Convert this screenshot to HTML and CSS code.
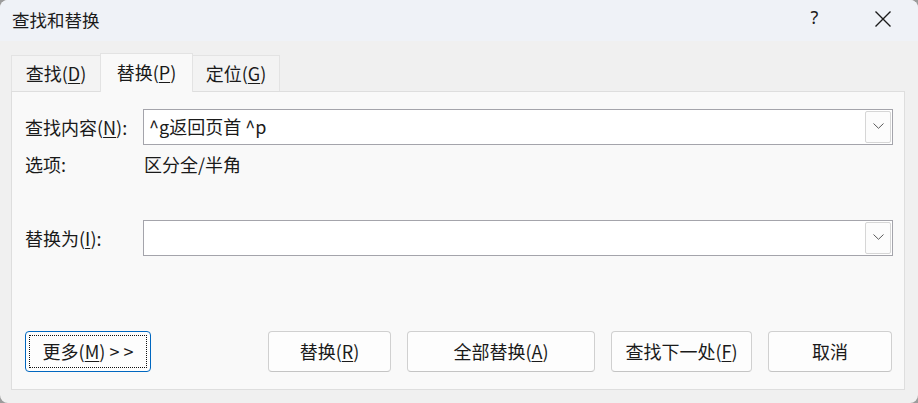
FILE: index.html
```html
<!DOCTYPE html>
<html lang="zh-CN">
<head>
<meta charset="utf-8">
<title>查找和替换</title>
<link rel="stylesheet" href="styles.css">
</head>
<body>
<div class="window">
  <div class="titlebar">
    <span class="title">查找和替换</span>
    <div class="caption">
      <span class="cap-btn help">?</span>
      <span class="cap-btn close">
        <svg width="16" height="16" viewBox="0 0 16 16"><path d="M0.5 0.5 L15.5 15.5 M15.5 0.5 L0.5 15.5" stroke="#1b1b1b" stroke-width="1.4" fill="none"/></svg>
      </span>
    </div>
  </div>
  <div class="body">
    <div class="tabs">
      <div class="tab t1">查找(<u>D</u>)</div>
      <div class="tab t2 active">替换(<u>P</u>)</div>
      <div class="tab t3">定位(<u>G</u>)</div>
    </div>
    <div class="panel">
      <div class="field-row">
        <span class="label">查找内容(<u>N</u>):</span>
        <div class="combo">
          <span class="combo-text">^g返回页首 ^p</span>
          <span class="combo-btn"><svg width="11" height="6" viewBox="0 0 11 6"><path d="M0.5 0.5 L5.5 5.3 L10.5 0.5" stroke="#5a5a5a" stroke-width="1" fill="none"/></svg></span>
        </div>
      </div>
      <div class="options-row">
        <span class="label">选项:</span>
        <span class="opt-value">区分全/半角</span>
      </div>
      <div class="field-row replace-row">
        <span class="label">替换为(<u>I</u>):</span>
        <div class="combo">
          <span class="combo-text"></span>
          <span class="combo-btn"><svg width="11" height="6" viewBox="0 0 11 6"><path d="M0.5 0.5 L5.5 5.3 L10.5 0.5" stroke="#5a5a5a" stroke-width="1" fill="none"/></svg></span>
        </div>
      </div>
      <div class="buttons">
        <button class="btn more">更多(<u>M</u>) &gt; &gt;</button>
        <div class="btn-group">
          <button class="btn b-replace">替换(<u>R</u>)</button>
          <button class="btn b-all">全部替换(<u>A</u>)</button>
          <button class="btn b-next">查找下一处(<u>F</u>)</button>
          <button class="btn b-cancel">取消</button>
        </div>
      </div>
    </div>
  </div>
</div>
</body>
</html>
```

FILE: styles.css
```css
* { box-sizing: border-box; }
html, body { margin: 0; padding: 0; }
body {
  width: 918px;
  height: 403px;
  background: #9c9c9c;
  font-family: "Noto Sans CJK SC", "Noto Sans", sans-serif;
  font-size: 18px;
  color: #1a1a1a;
  overflow: hidden;
}
u { text-decoration: underline; text-underline-offset: 2px; text-decoration-thickness: 1px; }

.window {
  width: 918px;
  height: 403px;
  background: #f0f0f0;
  border-radius: 8px;
  overflow: hidden;
  display: flex;
  flex-direction: column;
}

.titlebar {
  height: 41px;
  background: #eff2f7;
  display: flex;
  align-items: center;
  justify-content: space-between;
  padding-left: 12px;
}
.title { font-size: 17.5px; line-height: 24px; margin-top: -2px; }
.caption { display: flex; height: 41px; }
.cap-btn {
  width: 69px;
  height: 41px;
  display: flex;
  align-items: center;
  justify-content: center;
}
.help { font-size: 18px; font-family: "Noto Sans", sans-serif; color: #1b1b1b; margin-top: -4px; }
.close svg { margin-top: -4px; margin-left: -1px; }

.body {
  flex: 1;
  display: flex;
  flex-direction: column;
  padding: 12px 13px 13px 11px;
}

.tabs {
  display: flex;
  align-items: flex-end;
  height: 38px;
  position: relative;
  z-index: 1;
}
.tab {
  height: 36px;
  display: flex;
  align-items: center;
  justify-content: center;
  background: #f3f3f3;
  border: 1px solid #e3e3e3;
  border-bottom: none;
  line-height: 1;
  padding-bottom: 1px;
}
.t1 { width: 89px; border-right: none; }
.t2 { width: 93px; }
.t3 { width: 87px; border-left: none; }
.tab.active {
  height: 39px;
  margin-bottom: -1px;
  background: #f9f9f9;
  border-color: #e3e3e3;
  padding-bottom: 3px;
}

.panel {
  flex: 1;
  background: #f9f9f9;
  border: 1px solid #dedede;
  padding: 17px 11px 17px 13px;
  display: flex;
  flex-direction: column;
}

.field-row {
  display: flex;
  align-items: center;
  height: 36px;
}
.label { width: 118px; flex: none; line-height: 24px; }
.combo {
  flex: 1;
  height: 36px;
  background: #ffffff;
  border: 1px solid #a4a4ab;
  display: flex;
  align-items: center;
  padding: 1px;
}
.combo-text {
  flex: 1;
  padding-left: 4px;
  line-height: 24px;
  font-size: 18px;
  margin-top: -2px;
}
.combo-btn {
  width: 26px;
  height: 32px;
  border: 1px solid #d6d6d6;
  border-radius: 2px;
  background: #fcfcfc;
  display: flex;
  align-items: center;
  justify-content: center;
}
.combo-btn svg { margin-top: -2px; }

.options-row {
  display: flex;
  align-items: center;
  height: 24px;
  margin-top: 7px;
}
.opt-value { padding-left: 1px; }

.replace-row { margin-top: 44px; }

.buttons {
  margin-top: 75px;
  display: flex;
  justify-content: space-between;
  align-items: center;
}
.btn-group { display: flex; gap: 16px; margin-right: 1px; }
.btn {
  height: 41px;
  font-family: inherit;
  font-size: 18px;
  color: #1a1a1a;
  background: #fdfdfd;
  border: 1px solid #d0d0d0;
  border-bottom-color: #c4c4c4;
  border-radius: 4px;
  padding: 0 0 2px 0;
  line-height: 24px;
}
.more {
  width: 126px;
  border: 1px solid #0067c0;
  outline: 1px dotted #111;
  outline-offset: -5px;
}
.b-replace { width: 123px; }
.b-all { width: 188px; }
.b-next { width: 141px; }
.b-cancel { width: 124px; }
```
